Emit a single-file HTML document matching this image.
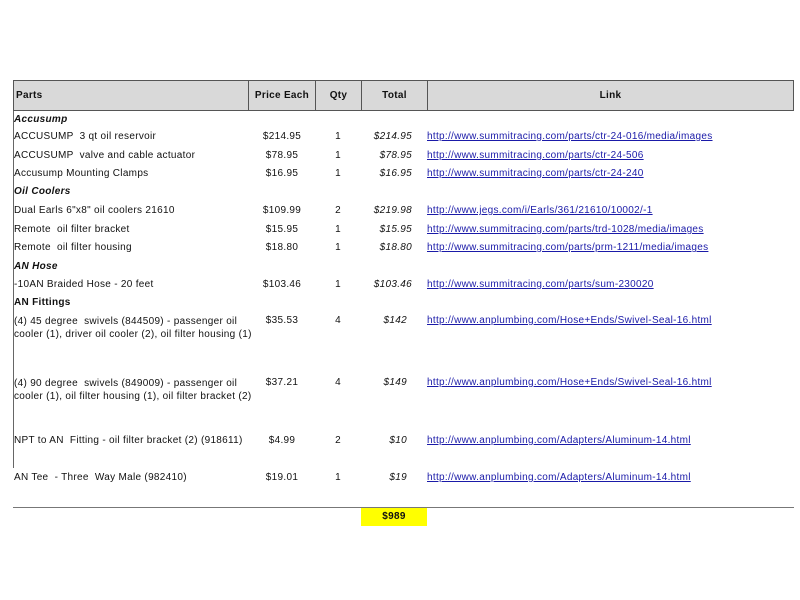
<!DOCTYPE html>
<html><head><meta charset="utf-8"><style>
body{margin:0;width:800px;height:600px;background:#fff;position:relative;overflow:hidden;font-family:"Liberation Sans",sans-serif;font-size:10px;letter-spacing:0.3px;color:#111}
.a{position:absolute;white-space:nowrap;line-height:12px}
.hd{position:absolute;top:80px;height:31px;background:#d9d9d9;border:1px solid #555;box-sizing:border-box;font-weight:bold;display:flex;align-items:center;justify-content:center}
.c{text-align:center}
.i{font-style:italic}
.b{font-weight:bold}
.l{color:#1a1aa8;text-decoration:underline}
</style></head><body>
<div class="hd" style="left:13px;width:236px;justify-content:flex-start;padding-left:2px">Parts</div>
<div class="hd" style="left:248px;width:68px">Price Each</div>
<div class="hd" style="left:315px;width:47px">Qty</div>
<div class="hd" style="left:361px;width:67px">Total</div>
<div class="hd" style="left:427px;width:367px">Link</div>
<div style="position:absolute;left:13px;top:111px;width:1px;height:357px;background:#666"></div>
<div style="position:absolute;left:13px;top:507px;width:781px;height:1px;background:#777"></div>
<div style="position:absolute;left:361px;top:508px;width:66px;height:18px;background:#ffff00"></div>
<div class="a b" style="left:361px;width:66px;top:511px;text-align:center">$989</div>

<div class="a b i" style="left:14px;top:114px">Accusump</div>
<div class="a b i" style="left:14px;top:186px">Oil Coolers</div>
<div class="a b i" style="left:14px;top:261px">AN Hose</div>
<div class="a b" style="left:14px;top:297px">AN Fittings</div>

<div class="a" style="left:14px;top:131px">ACCUSUMP &nbsp;3 qt oil reservoir</div>
<div class="a" style="left:14px;top:150px">ACCUSUMP &nbsp;valve and cable actuator</div>
<div class="a" style="left:14px;top:168px">Accusump Mounting Clamps</div>
<div class="a" style="left:14px;top:205px">Dual Earls 6"x8" oil coolers 21610</div>
<div class="a" style="left:14px;top:224px">Remote &nbsp;oil filter bracket</div>
<div class="a" style="left:14px;top:242px">Remote &nbsp;oil filter housing</div>
<div class="a" style="left:14px;top:279px">-10AN Braided Hose - 20 feet</div>
<div class="a" style="left:14px;top:315px;line-height:13px">(4) 45 degree &nbsp;swivels (844509) - passenger oil<br>cooler (1), driver oil cooler (2), oil filter housing (1)</div>
<div class="a" style="left:14px;top:377px;line-height:13px">(4) 90 degree &nbsp;swivels (849009) - passenger oil<br>cooler (1), oil filter housing (1), oil filter bracket (2)</div>
<div class="a" style="left:14px;top:435px">NPT to AN &nbsp;Fitting - oil filter bracket (2) (918611)</div>
<div class="a" style="left:14px;top:472px">AN Tee &nbsp;- Three &nbsp;Way Male (982410)</div>

<div class="a c" style="left:248px;width:68px;top:131px">$214.95</div>
<div class="a c" style="left:248px;width:68px;top:150px">$78.95</div>
<div class="a c" style="left:248px;width:68px;top:168px">$16.95</div>
<div class="a c" style="left:248px;width:68px;top:205px">$109.99</div>
<div class="a c" style="left:248px;width:68px;top:224px">$15.95</div>
<div class="a c" style="left:248px;width:68px;top:242px">$18.80</div>
<div class="a c" style="left:248px;width:68px;top:279px">$103.46</div>
<div class="a c" style="left:248px;width:68px;top:315px">$35.53</div>
<div class="a c" style="left:248px;width:68px;top:377px">$37.21</div>
<div class="a c" style="left:248px;width:68px;top:435px">$4.99</div>
<div class="a c" style="left:248px;width:68px;top:472px">$19.01</div>

<div class="a c" style="left:315px;width:46px;top:131px">1</div>
<div class="a c" style="left:315px;width:46px;top:150px">1</div>
<div class="a c" style="left:315px;width:46px;top:168px">1</div>
<div class="a c" style="left:315px;width:46px;top:205px">2</div>
<div class="a c" style="left:315px;width:46px;top:224px">1</div>
<div class="a c" style="left:315px;width:46px;top:242px">1</div>
<div class="a c" style="left:315px;width:46px;top:279px">1</div>
<div class="a c" style="left:315px;width:46px;top:315px">4</div>
<div class="a c" style="left:315px;width:46px;top:377px">4</div>
<div class="a c" style="left:315px;width:46px;top:435px">2</div>
<div class="a c" style="left:315px;width:46px;top:472px">1</div>

<div class="a i" style="left:361px;width:51px;top:131px;text-align:right">$214.95</div>
<div class="a i" style="left:361px;width:51px;top:150px;text-align:right">$78.95</div>
<div class="a i" style="left:361px;width:51px;top:168px;text-align:right">$16.95</div>
<div class="a i" style="left:361px;width:51px;top:205px;text-align:right">$219.98</div>
<div class="a i" style="left:361px;width:51px;top:224px;text-align:right">$15.95</div>
<div class="a i" style="left:361px;width:51px;top:242px;text-align:right">$18.80</div>
<div class="a i" style="left:361px;width:51px;top:279px;text-align:right">$103.46</div>
<div class="a i" style="left:361px;width:46px;top:315px;text-align:right">$142</div>
<div class="a i" style="left:361px;width:46px;top:377px;text-align:right">$149</div>
<div class="a i" style="left:361px;width:46px;top:435px;text-align:right">$10</div>
<div class="a i" style="left:361px;width:46px;top:472px;text-align:right">$19</div>

<div class="a l" style="left:427px;top:131px">http://www.summitracing.com/parts/ctr-24-016/media/images</div>
<div class="a l" style="left:427px;top:150px">http://www.summitracing.com/parts/ctr-24-506</div>
<div class="a l" style="left:427px;top:168px">http://www.summitracing.com/parts/ctr-24-240</div>
<div class="a l" style="left:427px;top:205px">http://www.jegs.com/i/Earls/361/21610/10002/-1</div>
<div class="a l" style="left:427px;top:224px">http://www.summitracing.com/parts/trd-1028/media/images</div>
<div class="a l" style="left:427px;top:242px">http://www.summitracing.com/parts/prm-1211/media/images</div>
<div class="a l" style="left:427px;top:279px">http://www.summitracing.com/parts/sum-230020</div>
<div class="a l" style="left:427px;top:315px">http://www.anplumbing.com/Hose+Ends/Swivel-Seal-16.html</div>
<div class="a l" style="left:427px;top:377px">http://www.anplumbing.com/Hose+Ends/Swivel-Seal-16.html</div>
<div class="a l" style="left:427px;top:435px">http://www.anplumbing.com/Adapters/Aluminum-14.html</div>
<div class="a l" style="left:427px;top:472px">http://www.anplumbing.com/Adapters/Aluminum-14.html</div>
</body></html>
